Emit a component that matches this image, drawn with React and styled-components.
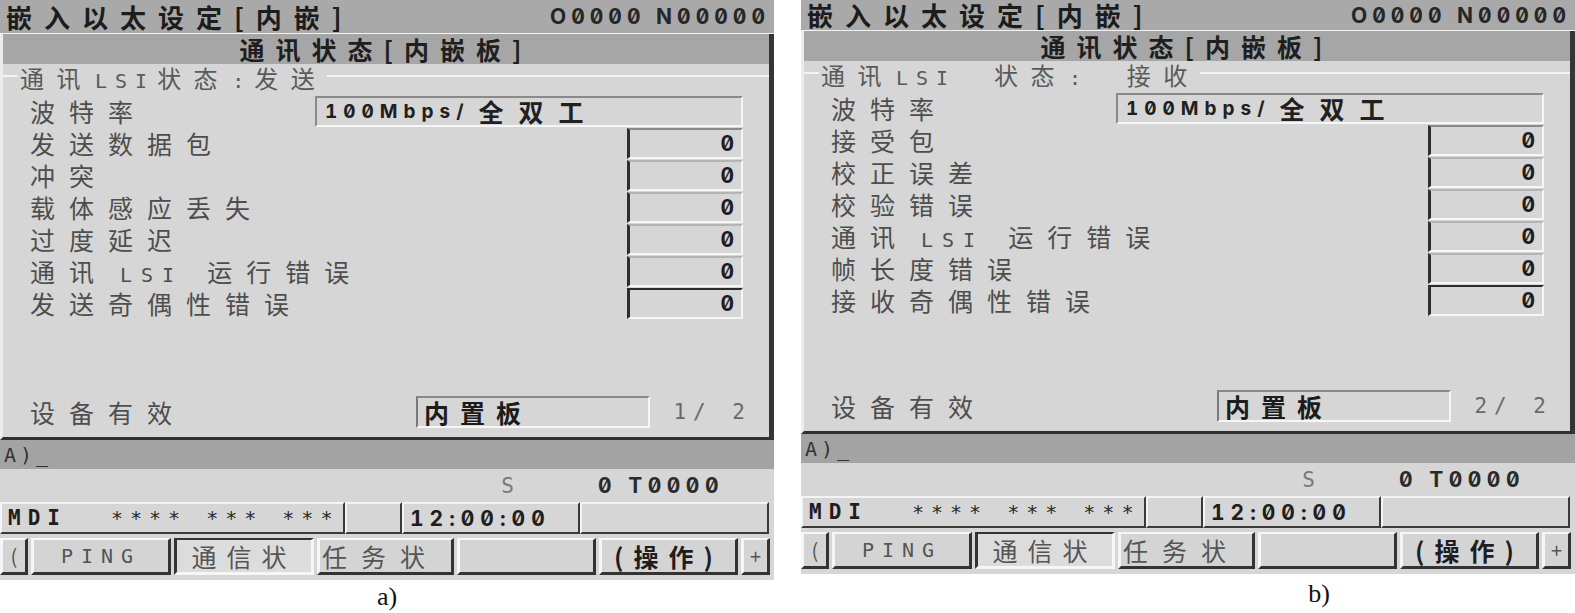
import React from "react";
import styled, { createGlobalStyle } from "styled-components";

const GlobalStyle = createGlobalStyle`
  html, body {
    margin: 0;
    padding: 0;
    background: #ffffff;
  }
  body {
    font-family: "Noto Sans CJK SC", "Noto Sans", sans-serif;
  }
`;

const CJK = `"Noto Sans CJK SC", "Noto Sans", sans-serif`;
const MONO = `"DejaVu Sans Mono", "Liberation Mono", monospace`;
// Inter gives the slashed zero of the CNC display where it can
const DIGITS = `Inter, "DejaVu Sans Mono", monospace`;

const screens = [
  {
    key: "a",
    group: "通讯LSI状态:发送",
    rows: ["发送数据包", "冲突", "载体感应丢失", "过度延迟", ["通讯", "LSI", "运行错误"], "发送奇偶性错误"],
    page: "1/ 2",
    caption: "a)",
    captionShift: 0,
  },
  {
    key: "b",
    group: "通讯LSI  状态:  接收",
    rows: ["接受包", "校正误差", "校验错误", ["通讯", "LSI", "运行错误"], "帧长度错误", "接收奇偶性错误"],
    page: "2/ 2",
    caption: "b)",
    captionShift: 262,
    compact: true,
  },
];

const renderLabel = (label) => {
  if (Array.isArray(label)) {
    return (
      <>
        {label[0]}
        <Latin $wide>{label[1]}</Latin>
        {label[2]}
      </>
    );
  }
  return label;
};

const renderGroup = (text) => {
  // latin runs use the narrow half-width cell
  const parts = text.split(/(LSI|:)/);
  return parts.map((p, i) =>
    p === "LSI" || p === ":" ? <Latin key={i}>{p}</Latin> : <span key={i}>{p}</span>
  );
};

const Screen = ({ data }) => (
  <Figure>
    <Panel>
      <TopBar $compact={data.compact}>
        <ScreenName>嵌入以太设定[内嵌]</ScreenName>
        <ProgNo>O0000 N00000</ProgNo>
      </TopBar>
      <Frame>
        <TitleBar>通讯状态[内嵌板]</TitleBar>
        <Body $compact={data.compact}>
          <GroupHead>
            <GroupLine $w="15px" />
            <GroupLabel>{renderGroup(data.group)}</GroupLabel>
            <GroupLine />
          </GroupHead>
          <Rows>
            <Row>
              <Label>波特率</Label>
              <WideBox>
                <BoxDigits>100Mbps/</BoxDigits>全双工
              </WideBox>
            </Row>
            {data.rows.map((r, i) => (
              <Row key={i}>
                <Label>{renderLabel(r)}</Label>
                <ValueBox $first={i === 0} $strong={i === 5}>0</ValueBox>
              </Row>
            ))}
          </Rows>
          <DeviceRow>
            <Label>设备有效</Label>
            <DeviceBox>内置板</DeviceBox>
            <PageNo>{data.page}</PageNo>
          </DeviceRow>
        </Body>
      </Frame>
      <InputBar>A)_</InputBar>
      <StatusRow>
        <SpindleS>S</SpindleS>
        <ToolNo>0 T0000</ToolNo>
      </StatusRow>
      <InfoRow>
        <InfoCell $w="345px">
          <ModeText>MDI</ModeText>
          <Stars>**** *** ***</Stars>
        </InfoCell>
        <InfoCell $w="57px" />
        <InfoCell $w="178px">
          <ModeText $digits>12:00:00</ModeText>
        </InfoCell>
        <InfoCell $grow />
      </InfoRow>
      <KeyRow>
        <SoftKey $w="28px" $edge>(</SoftKey>
        <SoftKey $w="140px">
          <Latin $wide>PING</Latin>
        </SoftKey>
        <SoftKey $w="140px" $active>
          通信状
        </SoftKey>
        <SoftKey $w="137px" $align="flex-start">
          任务状
        </SoftKey>
        <SoftKey $w="139px" />
        <SoftKey $w="139px" $dark>
          (操作)
        </SoftKey>
        <SoftKey $w="29px" $edge>
          +
        </SoftKey>
      </KeyRow>
    </Panel>
    <Caption $shift={data.captionShift}>{data.caption}</Caption>
  </Figure>
);

export default function App() {
  return (
    <>
      <GlobalStyle />
      <Page>
        {screens.map((s) => (
          <Screen key={s.key} data={s} />
        ))}
      </Page>
    </>
  );
}

const Page = styled.div`
  display: flex;
  gap: 27px;
  width: 1575px;
  height: 613px;
  overflow: hidden;
`;

const Figure = styled.div`
  display: flex;
  flex-direction: column;
  width: 774px;
`;

const Panel = styled.div`
  display: flex;
  flex-direction: column;
  background: #d6d6d6;
  padding-bottom: 5px;
`;

const TopBar = styled.div`
  height: ${(p) => (p.$compact ? "30px" : "33px")};
  background: #a9a9a9;
  display: flex;
  align-items: center;
  justify-content: space-between;
  padding: 0 4px 0 6px;
  border-bottom: 1px solid #f2f2f2;
  overflow: hidden;
`;

const ScreenName = styled.div`
  font-family: ${CJK};
  font-weight: 700;
  font-size: 26px;
  letter-spacing: 12px;
  color: #1c1c1c;
  line-height: 30px;
  white-space: pre;
`;

const ProgNo = styled.div`
  font-family: ${DIGITS};
  font-variant-numeric: slashed-zero tabular-nums;
  font-weight: 700;
  font-size: 21px;
  letter-spacing: 5px;
  color: #262626;
  white-space: pre;
`;

const Frame = styled.div`
  border-left: 3px solid #ececec;
  border-right: 5px solid #353535;
  border-bottom: 3px solid #303030;
`;

const TitleBar = styled.div`
  height: 30px;
  background: #a6a6a6;
  display: flex;
  align-items: center;
  justify-content: center;
  font-family: ${CJK};
  font-weight: 700;
  font-size: 25px;
  line-height: 30px;
  letter-spacing: 11px;
  color: #1f1f1f;
  white-space: pre;
`;

const Body = styled.div`
  height: ${(p) => (p.$compact ? "370px" : "373px")};
  display: flex;
  flex-direction: column;
`;

const GroupHead = styled.div`
  height: 30px;
  display: flex;
  align-items: flex-start;
`;

const GroupLine = styled.div`
  width: ${(p) => p.$w || "auto"};
  flex: ${(p) => (p.$w ? "none" : "1")};
  height: 2px;
  background: #f4f4f4;
  margin-top: 11px;
`;

const GroupLabel = styled.div`
  font-family: ${CJK};
  font-size: 24px;
  line-height: 28px;
  letter-spacing: 12.5px;
  color: #5a5a5a;
  padding-left: 2px;
  white-space: pre;
`;

const Latin = styled.span`
  font-family: ${MONO};
  font-size: 20px;
  letter-spacing: ${(p) => (p.$wide ? "9px" : "8px")};
  margin: 0 ${(p) => (p.$wide ? "24px" : "2px")} 0 ${(p) => (p.$wide ? "12px" : "2px")};
`;

const Rows = styled.div`
  display: flex;
  flex-direction: column;
  padding-top: 2px;
`;

const Row = styled.div`
  height: 32px;
  display: flex;
  align-items: flex-start;
  justify-content: space-between;
  padding: 0 26px 0 27px;
`;

const Label = styled.div`
  font-family: ${CJK};
  font-size: 25px;
  line-height: 31px;
  letter-spacing: 14px;
  color: #4e4e4e;
  white-space: pre;
`;

const WideBox = styled.div`
  width: 416px;
  height: 27px;
  border-top: 2px solid #8a8a8a;
  border-left: 2px solid #8a8a8a;
  border-right: 2px solid #f6f6f6;
  border-bottom: 2px solid #f6f6f6;
  display: flex;
  align-items: center;
  padding-left: 8px;
  font-family: ${CJK};
  font-weight: 700;
  font-size: 25px;
  line-height: 27px;
  letter-spacing: 15px;
  color: #202020;
  white-space: pre;
`;

const BoxDigits = styled.span`
  font-family: ${DIGITS};
  font-variant-numeric: slashed-zero tabular-nums;
  font-weight: 700;
  font-size: 19px;
  letter-spacing: 6px;
  margin-right: 9px;
`;

const ValueBox = styled.div`
  width: 104px;
  height: 27px;
  border-top: 2px solid ${(p) => (p.$strong ? "#2c2c2c" : p.$first ? "#8a8a8a" : "#b4b4b4")};
  border-left: 3px solid #2f2f2f;
  border-right: 2px solid #f6f6f6;
  border-bottom: 2px solid #f6f6f6;
  display: flex;
  align-items: center;
  justify-content: flex-end;
  padding-right: 7px;
  font-family: ${DIGITS};
  font-variant-numeric: slashed-zero tabular-nums;
  font-weight: 700;
  font-size: 21px;
  color: #1e1e1e;
`;

const DeviceRow = styled.div`
  margin-top: auto;
  margin-bottom: 9px;
  display: grid;
  grid-template-columns: 386px 234px 1fr;
  align-items: center;
  padding: 0 24px 0 27px;
`;

const DeviceBox = styled.div`
  height: 28px;
  border-top: 2px solid #8a8a8a;
  border-left: 2px solid #7a7a7a;
  border-right: 2px solid #f6f6f6;
  border-bottom: 2px solid #f6f6f6;
  display: flex;
  align-items: center;
  padding-left: 6px;
  font-family: ${CJK};
  font-weight: 700;
  font-size: 25px;
  line-height: 28px;
  letter-spacing: 11px;
  color: #1c1c1c;
  white-space: pre;
`;

const PageNo = styled.div`
  font-family: ${MONO};
  font-size: 21px;
  letter-spacing: 7px;
  margin-right: -7px;
  color: #6a6a6a;
  text-align: right;
  white-space: pre;
`;

const InputBar = styled.div`
  height: 29px;
  background: #a3a3a3;
  display: flex;
  align-items: center;
  padding-left: 4px;
  font-family: ${MONO};
  font-size: 20px;
  letter-spacing: 4px;
  color: #333333;
`;

const StatusRow = styled.div`
  height: 33px;
  display: flex;
  align-items: center;
  justify-content: flex-end;
  padding-right: 50px;
  font-family: ${DIGITS};
  font-variant-numeric: slashed-zero tabular-nums;
  font-size: 21px;
`;

const SpindleS = styled.span`
  font-family: ${MONO};
  color: #7a7a7a;
  margin-right: 84px;
`;

const ToolNo = styled.span`
  font-weight: 700;
  letter-spacing: 5.5px;
  color: #2a2a2a;
  white-space: pre;
`;

const InfoRow = styled.div`
  height: 32px;
  display: flex;
  padding-right: 5px;
`;

const InfoCell = styled.div`
  width: ${(p) => p.$w || "auto"};
  flex: ${(p) => (p.$grow ? "1" : "none")};
  box-sizing: border-box;
  border-top: 2px solid #f4f4f4;
  border-left: 2px solid #f4f4f4;
  border-right: 2px solid #3a3a3a;
  border-bottom: 2px solid #3a3a3a;
  display: flex;
  align-items: center;
  padding-left: 6px;
  white-space: pre;
  overflow: hidden;
`;

const ModeText = styled.span`
  font-family: ${(p) => (p.$digits ? DIGITS : MONO)};
  font-variant-numeric: slashed-zero tabular-nums;
  font-weight: 700;
  font-size: 21px;
  letter-spacing: ${(p) => (p.$digits ? "6px" : "7px")};
  color: #1e1e1e;
`;

const Stars = styled.span`
  font-family: ${MONO};
  font-size: 20px;
  letter-spacing: 7px;
  color: #2a2a2a;
  margin-left: 44px;
`;

const KeyRow = styled.div`
  margin-top: 4px;
  height: 37px;
  display: flex;
  gap: 3px;
`;

const SoftKey = styled.div`
  width: ${(p) => p.$w};
  box-sizing: border-box;
  background: ${(p) => (p.$active ? "#dcdcdc" : "#d4d4d4")};
  border-top: 2px solid ${(p) => (p.$active ? "#333333" : "#f6f6f6")};
  border-left: 3px solid ${(p) => (p.$active ? "#333333" : "#f6f6f6")};
  border-right: 3px solid ${(p) => (p.$active ? "#f6f6f6" : "#333333")};
  border-bottom: 3px solid ${(p) => (p.$active ? "#f6f6f6" : "#333333")};
  display: flex;
  align-items: center;
  justify-content: ${(p) => p.$align || "center"};
  padding-left: ${(p) => (p.$align ? "2px" : "0")};
  font-family: ${CJK};
  font-weight: ${(p) => (p.$dark ? 700 : 400)};
  font-size: ${(p) => (p.$edge ? "20px" : "25px")};
  line-height: 30px;
  letter-spacing: ${(p) => (p.$edge ? "0" : p.$align ? "14px" : "10px")};
  color: ${(p) => (p.$dark ? "#1e1e1e" : "#555555")};
  white-space: pre;
  overflow: hidden;

  ${Latin} {
    margin: 0;
    letter-spacing: 8px;
  }
`;

const Caption = styled.div`
  flex: 1;
  display: flex;
  align-items: center;
  justify-content: center;
  padding-left: ${(p) => p.$shift}px;
  font-family: "Liberation Serif", "Times New Roman", serif;
  font-size: 26px;
  color: #111111;
`;
